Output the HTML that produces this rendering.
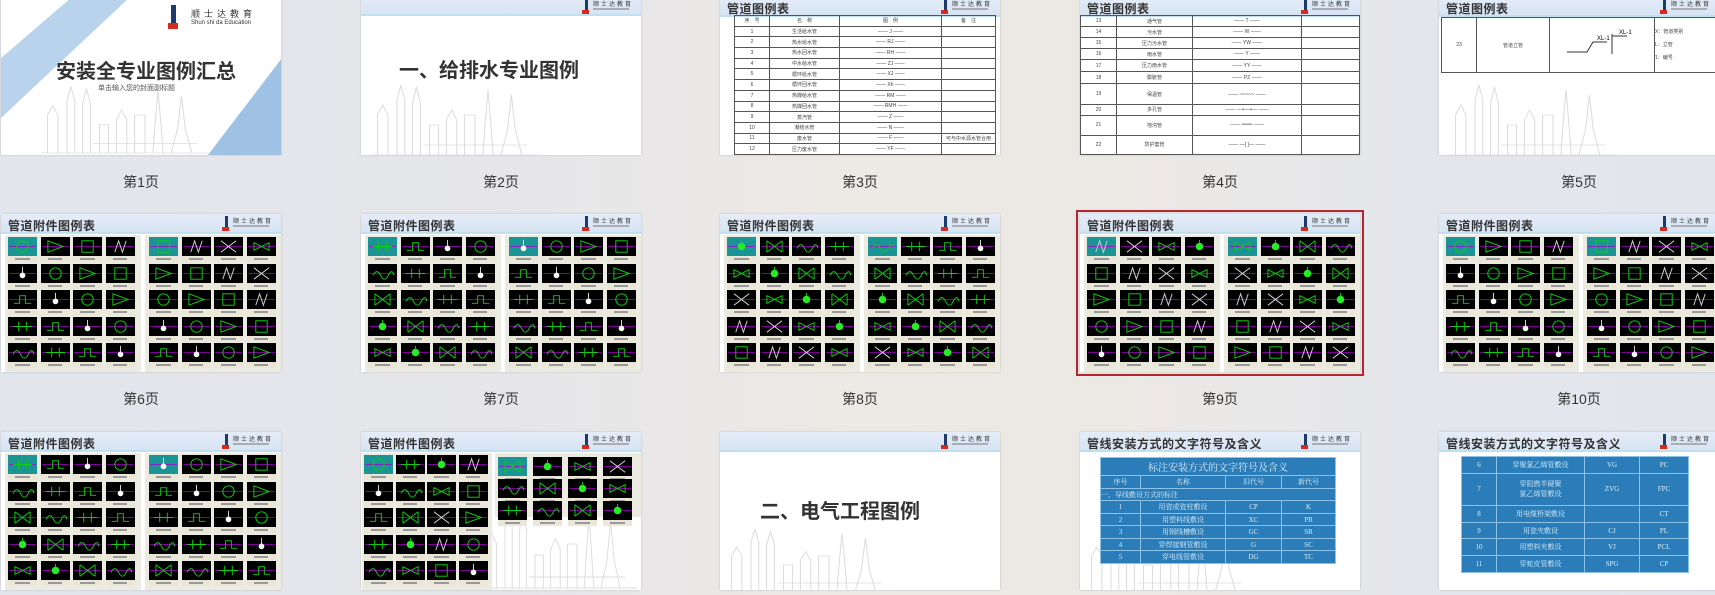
<!DOCTYPE html>
<html><head><meta charset="utf-8">
<style>
*{margin:0;padding:0;box-sizing:border-box}
body{width:1715px;height:595px;overflow:hidden;position:relative;font-family:"Liberation Sans","Noto Sans CJK SC",sans-serif;
background:linear-gradient(90deg,#e2e5ec 0%,#e6e6ea 30%,#ede9e4 50%,#ece9e5 65%,#e4e6ec 85%,#e2e5ec 100%)}
.t{position:absolute;width:280px;height:158px;background:#fff;overflow:hidden;box-shadow:0 0 2px rgba(0,0,0,.18)}
.sel{outline:2px solid #b3262d;outline-offset:2px}
.lab{position:absolute;width:280px;text-align:center;font-size:14px;color:#333}
.hd{position:absolute;left:0;top:0;width:280px;height:20px;background:linear-gradient(#e4ecf7,#d7e4f4);border-bottom:2px solid #bfe0ee}
.ti{position:absolute;left:7px;top:3px;font-size:12px;font-weight:bold;color:#333;letter-spacing:0.5px;white-space:nowrap}
.logo{position:absolute;right:6px;top:2px;width:50px;height:16px}
.logo i{position:absolute;left:0;top:0;width:3px;height:14px;background:#1c3a6a}
.logo b{position:absolute;left:-3px;top:11px;width:7px;height:4px;background:#d42a1f}
.logo span{position:absolute;left:8px;top:0;font-size:6px;color:#333;white-space:nowrap;letter-spacing:2px}
.logo em{position:absolute;left:8px;top:9px;width:36px;height:2px;background:#888;opacity:.6}
.cell{position:absolute;background:#000}
.cl{position:absolute;height:6px;background:#eae6d8}
.cl:after{content:"";position:absolute;left:25%;right:25%;top:2px;height:2px;background:#999}
.panel{position:absolute;background:#ecebe2}
table{border-collapse:collapse;position:absolute}
.wt td{border:1px solid #555;font-size:5px;color:#444;text-align:center}
.bt{background:#2a7db8;color:#dbeefa}
.bt td{border:1px solid #8cc2e6;font-size:7px;text-align:center;font-family:"Liberation Serif","Noto Serif CJK SC",serif}
.sky{position:absolute;left:0;bottom:0}
</style></head><body>

<svg width="0" height="0" style="position:absolute">
<defs>
<g id="sky" fill="none" stroke="#dcdcdc" stroke-width="0.8">
<path d="M5 80 L5 40 L9 30 L13 40 L13 80 M20 80 L20 25 L23 10 L26 25 L26 80 M32 80 L32 28 L35 12 L38 28 L38 80 M45 80 L45 50 L52 50 L52 80 M58 80 L58 45 L62 35 L66 45 L66 80 M72 80 L72 40 L80 40 L80 80 M86 80 L88 45 L90 15 L92 45 L94 80 M100 80 L105 55 L108 20 L111 55 L116 80 M0 80 L130 80 M40 70 L120 70"/>
</g>
</defs>
</svg>

<!-- Row 1 -->
<div class="t" style="left:1px;top:-3px">
 <svg width="280" height="158" style="position:absolute;left:0;top:0">
  <polygon points="71,0 129,0 0,121 0,61" fill="#b9d3ec"/>
  <polygon points="281,61 281,158 207,158" fill="#9fc1e3"/>
  <use href="#sky" transform="translate(40,80) scale(1.3,0.95)"/>
 </svg>
 <div class="logo" style="right:10px;top:8px;width:100px;height:26px"><i style="width:5px;height:24px"></i><b style="top:18px;width:10px;height:6px"></b><span style="left:20px;top:2px;font-size:9px;letter-spacing:4px">顺士达教育</span><span style="left:20px;top:15px;font-size:6px;letter-spacing:0">Shun shi da Education</span></div>
 <div style="position:absolute;left:55px;top:58px;font-size:20px;font-weight:bold;color:#333">安装全专业图例汇总</div>
 <div style="position:absolute;left:97px;top:86px;font-size:7px;color:#555">单击输入您的封面副标题</div>
</div>
<div class="lab" style="left:1px;top:172px">第1页</div>

<div class="t" style="left:361px;top:-3px">
 <div class="hd" style="height:19px"></div><div class="logo"><i></i><b></b><span>顺士达教育</span><em></em></div>
 <svg class="sky" width="280" height="80"><use href="#sky" transform="translate(10,0) scale(1.3,1)"/></svg>
 <div style="position:absolute;left:38px;top:57px;font-size:20px;font-weight:bold;color:#333">一、给排水专业图例</div>
</div>
<div class="lab" style="left:361px;top:172px">第2页</div>

<div class="t" style="left:720px;top:-3px" id="t3">
 <div class="hd"></div><div class="ti">管道图例表</div><div class="logo"><i></i><b></b><span>顺士达教育</span><em></em></div>
</div>
<div class="lab" style="left:720px;top:172px">第3页</div>

<div class="t" style="left:1080px;top:-3px" id="t4">
 <div class="hd"></div><div class="ti">管道图例表</div><div class="logo"><i></i><b></b><span>顺士达教育</span><em></em></div>
</div>
<div class="lab" style="left:1080px;top:172px">第4页</div>

<div class="t" style="left:1439px;top:-3px">
 <div class="hd"></div><div class="ti">管道图例表</div><div class="logo"><i></i><b></b><span>顺士达教育</span><em></em></div>
 <table class="wt" style="left:2px;top:20px;width:276px;height:56px;border:1px solid #555"><tr><td style="width:35px">23</td><td style="width:73px">管道立管</td><td style="width:105px"><svg width="90" height="40"><path d="M10 28 H30 L36 18 H50 M55 10 V30 M55 12 H70" stroke="#333" fill="none"/><text x="40" y="16" font-size="6">XL-1</text><text x="62" y="10" font-size="6">XL-1</text></svg></td><td style="text-align:left;line-height:13px">X：管道类别<br>L：立管<br>1：编号</td></tr></table>
 <svg class="sky" width="280" height="80"><use href="#sky" transform="translate(10,0) scale(1.3,1)"/></svg>
</div>
<div class="lab" style="left:1439px;top:172px">第5页</div>

<!-- Row 2 -->
<div class="t g" style="left:1px;top:214px"></div>
<div class="lab" style="left:1px;top:389px">第6页</div>
<div class="t g" style="left:361px;top:214px"></div>
<div class="lab" style="left:361px;top:389px">第7页</div>
<div class="t g" style="left:720px;top:214px"></div>
<div class="lab" style="left:720px;top:389px">第8页</div>
<div class="t g sel" style="left:1080px;top:214px"></div>
<div class="lab" style="left:1080px;top:389px">第9页</div>
<div class="t g" style="left:1439px;top:214px"></div>
<div class="lab" style="left:1439px;top:389px">第10页</div>

<!-- Row 3 -->
<div class="t g" style="left:1px;top:432px"></div>
<div class="t" style="left:361px;top:432px" id="t12"></div>
<div class="t" style="left:720px;top:432px">
 <div class="hd"></div><div class="logo"><i></i><b></b><span>顺士达教育</span><em></em></div>
 <svg class="sky" width="280" height="70"><use href="#sky" transform="translate(5,0) scale(1.3,0.9)"/></svg>
 <div style="position:absolute;left:40px;top:63px;font-size:20px;font-weight:bold;color:#333">二、电气工程图例</div>
</div>
<div class="t" style="left:1080px;top:432px">
 <div class="hd"></div><div class="ti">管线安装方式的文字符号及含义</div><div class="logo"><i></i><b></b><span>顺士达教育</span><em></em></div>
 <svg class="sky" width="280" height="50"><use href="#sky" transform="translate(5,-20) scale(1.3,0.9)"/></svg>
 <table class="bt" style="left:20px;top:25px;width:236px;height:107px">
  <tr><td colspan="4" style="font-size:10px">标注安装方式的文字符号及含义</td></tr>
  <tr><td style="width:40px">序号</td><td style="width:85px">名称</td><td style="width:56px">旧代号</td><td>新代号</td></tr>
  <tr><td colspan="4" style="text-align:left">一、导线敷设方式的标注</td></tr>
  <tr><td>1</td><td>用瓷或瓷柱敷设</td><td>CP</td><td>K</td></tr>
  <tr><td>2</td><td>用塑料线敷设</td><td>XC</td><td>PR</td></tr>
  <tr><td>3</td><td>用钢线槽敷设</td><td>GC</td><td>SR</td></tr>
  <tr><td>4</td><td>穿焊接钢管敷设</td><td>G</td><td>SC</td></tr>
  <tr><td>5</td><td>穿电线管敷设</td><td>DG</td><td>TC</td></tr>
 </table>
</div>
<div class="t" style="left:1439px;top:432px">
 <div class="hd"></div><div class="ti">管线安装方式的文字符号及含义</div><div class="logo"><i></i><b></b><span>顺士达教育</span><em></em></div>
 <table class="bt" style="left:22px;top:24px;width:228px;height:117px">
  <tr><td style="width:35px">6</td><td style="width:88px">穿聚氯乙烯管敷设</td><td style="width:55px">VG</td><td>PC</td></tr>
  <tr><td>7</td><td>穿阻燃半硬聚<br>氯乙烯管敷设</td><td>ZVG</td><td>FPC</td></tr>
  <tr><td>8</td><td>用电缆桥架敷设</td><td></td><td>CT</td></tr>
  <tr><td>9</td><td>用瓷夹敷设</td><td>CJ</td><td>PL</td></tr>
  <tr><td>10</td><td>用塑料夹敷设</td><td>VJ</td><td>PCL</td></tr>
  <tr><td>11</td><td>穿蛇皮管敷设</td><td>SPG</td><td>CP</td></tr>
 </table>
</div>

<script>
var HDR='<div class="hd"></div><div class="ti">管道附件图例表</div><div class="logo"><i></i><b></b><span>顺士达教育</span><em></em></div>';
var shapes=[
'<circle cx="14" cy="10" r="6" stroke="#1c1" fill="none"/>',
'<path d="M6 4 L22 16 M6 16 L22 4 M6 4 V16 M22 4 V16" stroke="#1c1" fill="none"/>',
'<rect x="8" y="4" width="12" height="12" stroke="#1c1" fill="none"/>',
'<path d="M4 10 H24 M10 5 V15 M18 5 V15" stroke="#1c1" fill="none"/>',
'<path d="M6 4 L22 16 M6 16 L22 4" stroke="#ddd" fill="none"/>',
'<circle cx="14" cy="12" r="3" fill="#fff"/><path d="M14 3 V10" stroke="#ddd"/>',
'<circle cx="14" cy="10" r="4" fill="#2e2"/><path d="M14 3 V7" stroke="#1c1"/>',
'<path d="M6 4 L22 10 L6 16 Z" stroke="#1c1" fill="none"/>',
'<path d="M4 12 Q8 4 12 12 T20 12 T26 12" stroke="#1c1" fill="none"/>',
'<path d="M8 16 L12 4 L16 16 L20 4" stroke="#ccc" fill="none"/>',
'<path d="M5 14 H11 V6 H17 V14 H23" stroke="#1c1" fill="none"/>',
'<path d="M6 6 L14 10 L6 14 Z M22 6 L14 10 L22 14 Z" stroke="#1c1" fill="none"/>'];
function cell(p,x,y,k,teal){
 var s=shapes[k%shapes.length];
 var h='<div class="cell" style="left:'+x+'px;top:'+y+'px;width:29px;height:19px;'+(teal?'background:#1a9494':'')+'"><svg width="29" height="19" viewBox="0 0 28 20"><path d="M0 10 H28" stroke="#a0c" stroke-width="0.8"/>'+s+'</svg></div>';
 h+='<div class="cl" style="left:'+x+'px;top:'+(y+19)+'px;width:29px"></div>';
 return h;
}
function grid(x0,y0,cols,rows,seed,tealFirst){
 var h='';
 for(var r=0;r<rows;r++)for(var c=0;c<cols;c++){
  h+=cell(null,x0+c*32.5,y0+r*26.5,(seed+r*5+c*7)%shapes.length,tealFirst&&r==0&&c==0);
 }
 return h;
}
var gs=document.querySelectorAll('.t.g');
for(var i=0;i<gs.length;i++){
 var h=HDR;
 h+='<div class="panel" style="left:4px;top:21px;width:136px;height:137px"></div>';
 h+='<div class="panel" style="left:144px;top:21px;width:136px;height:137px"></div>';
 h+=grid(7,23,4,5,i*3,true)+grid(148,23,4,5,i*3+2,true);
 gs[i].innerHTML=h;
}
var t12=document.getElementById('t12');
var h=HDR+'<svg class="sky" width="280" height="90"><use href="#sky" transform="translate(120,0) scale(1.2,1.1)"/></svg>';
h+='<div class="panel" style="left:1px;top:21px;width:130px;height:137px"></div>';
h+='<div class="panel" style="left:134px;top:21px;width:146px;height:64px"></div>';
for(var r=0;r<5;r++)for(var c=0;c<4;c++)h+=cell(null,3+c*31.5,23+r*26.5,(r*5+c*3)%shapes.length,r==0&&c==0);
for(var r=0;r<3;r++)for(var c=0;c<4;c++)h+=cell(null,137+c*35,25+r*22,(r*7+c*5+1)%shapes.length,r==0&&c==0);
t12.innerHTML=h;
var n3=['生活给水管','热水给水管','热水回水管','中水给水管','循环给水管','循环回水管','热媒给水管','热媒回水管','蒸汽管','凝结水管','废水管','压力废水管'];
var c3=['J','RJ','RH','ZJ','XJ','Xh','RM','RMH','Z','N','F','YF'];
var h3='<table class="wt" style="left:14px;top:18px;width:262px;height:140px"><tr><td style="width:35px">序　号</td><td style="width:70px">名　称</td><td style="width:102px">图　例</td><td>备　注</td></tr>';
for(var i=0;i<12;i++)h3+='<tr><td>'+(i+1)+'</td><td>'+n3[i]+'</td><td>—— '+c3[i]+' ——</td><td>'+(i==10?'可与中水源水管合用':'')+'</td></tr>';
document.getElementById('t3').insertAdjacentHTML('beforeend',h3+'</table>');
var n4=['通气管','污水管','压力污水管','雨水管','压力雨水管','膨胀管','保温管','多孔管','地沟管','防护套管'];
var c4=['T','W','YW','Y','YY','PZ','〰〰〰','—+—+—','═══','—[ ]—'];
var hh=[11,11,11,11,12,12,20,11,20,19];
var h4='<table class="wt" style="left:0;top:18px;width:280px;height:140px">';
for(var i=0;i<10;i++)h4+='<tr style="height:'+hh[i]+'px"><td style="width:36px">'+(13+i)+'</td><td style="width:76px">'+n4[i]+'</td><td style="width:109px">—— '+c4[i]+' ——</td><td></td></tr>';
document.getElementById('t4').insertAdjacentHTML('beforeend',h4+'</table>');
</script>
</body></html>
